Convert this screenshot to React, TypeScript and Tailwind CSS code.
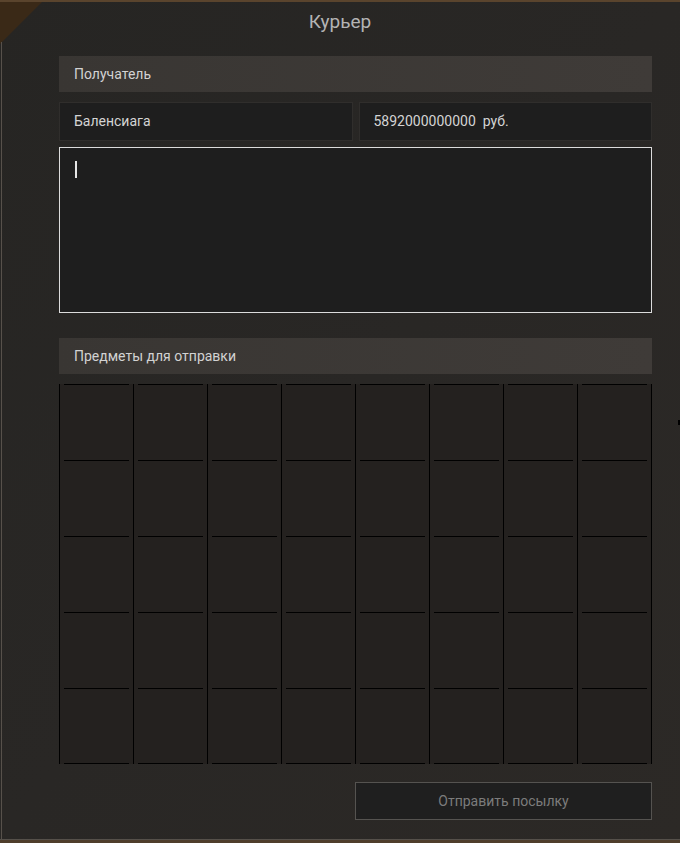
const rows = 5;
const cols = 8;

function SectionHeader({ title }: { title: string }) {
	return (
		<div className="h-[36px] flex items-center px-[15px] bg-gradient-to-r from-[#393633] to-[#3f3b38] text-[14px] text-[#d2d2d2]">
			{title}
		</div>
	);
}

export default function App() {
	const cells = Array.from({ length: rows * cols }, (_, i) => i);

	return (
		<div
			className="relative w-[680px] h-[843px] overflow-hidden bg-gradient-to-br from-[#262523] via-[#292725] to-[#2c2926] border-t-2 border-[#5a442d]"
			style={{ fontFamily: "Roboto, 'Noto Sans', sans-serif" }}
		>
			{/* corner decoration */}
			<div className="absolute left-0 top-0 w-[42px] h-[42px] bg-[#3a2917] [clip-path:polygon(0_0,100%_0,0_100%)]" />
			<div className="absolute left-[1px] top-[40px] bottom-[4px] w-[1px] bg-[#57514b]" />
			<div className="absolute left-0 right-0 bottom-0 h-[4px] bg-[#4f3e2b] border-t border-[#55504a]" />
			<div className="absolute right-0 top-[418px] w-[2px] h-[5px] bg-black" />

			<div className="h-[40px] flex items-center justify-center text-[19px] text-[#b4b4b4]">Курьер</div>

			<div className="ml-[59px] w-[593px] pt-[14px] flex flex-col">
				<SectionHeader title="Получатель" />

				<div className="mt-[10px] flex gap-[6px]">
					<div className="flex-1 h-[39px] flex items-center px-[14px] bg-[#1e1e1e] border border-[#302e2c] text-[14px] text-[#d4d4d4]">
						Баленсиага
					</div>
					<div className="flex-1 h-[39px] flex items-center px-[14px] bg-[#1e1e1e] border border-[#302e2c] text-[14px] text-[#d4d4d4]">
						5892000000000&nbsp;&nbsp;руб.
					</div>
				</div>

				<div className="mt-[6px] h-[166px] bg-[#1e1e1e] border border-[#dcdcdc] pl-[15px] pt-[13px]">
					<div className="w-[2px] h-[17px] bg-[#e6e6e6]" />
				</div>

				<div className="mt-[25px]">
					<SectionHeader title="Предметы для отправки" />
				</div>

				<div className="mt-[10px] grid grid-cols-8 border-r border-black">
					{cells.map((i) => (
						<div
							key={i}
							className="h-[76px] border-l border-black bg-[#24211f] flex"
						>
							<div
								className={`flex-1 mx-[4px] border-t border-black ${i >= (rows - 1) * cols ? "border-b" : ""}`}
							/>
						</div>
					))}
				</div>

				<div className="mt-[18px] flex justify-end">
					<button className="w-[297px] h-[38px] bg-[#1f1f1f] border border-[#555350] text-[14px] text-[#7c7c7c]">
						Отправить посылку
					</button>
				</div>
			</div>
		</div>
	);
}
